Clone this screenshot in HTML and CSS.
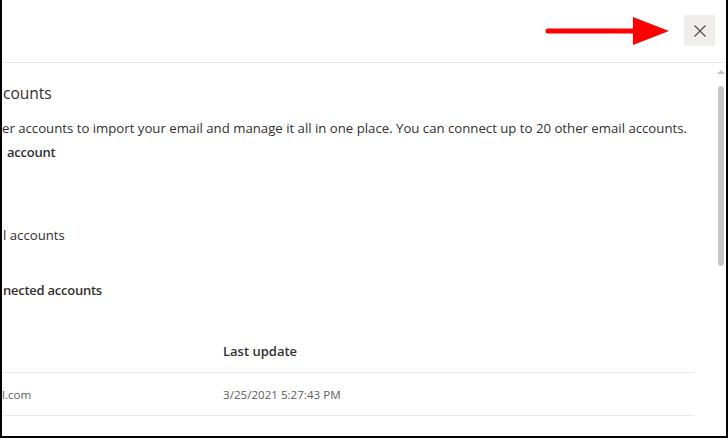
FILE: index.html
```html
<!DOCTYPE html>
<html lang="en">
<head>
<meta charset="utf-8">
<title>Connected accounts</title>
<link rel="stylesheet" href="styles.css">
</head>
<body>
<div class="frame">
  <header class="header">
    <svg class="arrow" width="126" height="30" viewBox="0 0 126 30" aria-hidden="true">
      <line x1="4" y1="15" x2="92" y2="15" stroke="#ff0000" stroke-width="5" stroke-linecap="round"/>
      <polygon points="89,1 125,15 89,29" fill="#ff0000"/>
    </svg>
    <button class="close" aria-label="Close">
      <svg width="14" height="14" viewBox="0 0 14 14" aria-hidden="true">
        <path d="M1.5 1.5 L12.5 12.5 M12.5 1.5 L1.5 12.5" stroke="#4a4a4a" stroke-width="1.1" fill="none"/>
      </svg>
    </button>
  </header>
  <div class="main">
    <section class="content">
      <h1 class="title">counts</h1>
      <p class="desc">er accounts to import your email and manage it all in one place. You can connect up to 20 other email accounts.</p>
      <h2 class="sub add">account</h2>
      <p class="plain other">l accounts</p>
      <h2 class="sub manage">nected accounts</h2>
      <div class="table">
        <div class="row head">
          <div class="col1"></div>
          <div class="col2">Last update</div>
        </div>
        <div class="row">
          <div class="col1">l.com</div>
          <div class="col2">3/25/2021 5:27:43 PM</div>
        </div>
      </div>
    </section>
    <div class="scrollbar">
      <div class="up"></div>
      <div class="thumb"></div>
    </div>
  </div>
</div>
</body>
</html>
```
FILE: styles.css
```css
* { box-sizing: border-box; }
html, body { margin: 0; padding: 0; background: #fff; }
body { font-family: "Open Sans", "Noto Sans", sans-serif; color: #323130; }

.frame {
  width: 728px;
  height: 438px;
  border-left: 2px solid #000;
  border-right: 2px solid #000;
  border-bottom: 2px solid #000;
  overflow: hidden;
  display: flex;
  flex-direction: column;
}

.header {
  height: 63px;
  flex: none;
  display: flex;
  justify-content: flex-end;
  align-items: flex-start;
  padding: 15px 11px 0 0;
  border-bottom: 1px solid #edebe9;
  gap: 14px;
}
.arrow { margin-top: 1px; }
.close {
  width: 31px;
  height: 31px;
  border: 0;
  border-radius: 2px;
  background: #efeeed;
  padding: 0;
  display: flex;
  align-items: center;
  justify-content: center;
}

.main { flex: 1; display: flex; min-height: 0; }
.content { flex: 1; padding-top: 18px; overflow: hidden; }

.title {
  margin: 0;
  padding-left: 1px;
  font-size: 15.5px;
  line-height: 24px;
  font-weight: 400;
}

.desc {
  margin: 13px 0 0;
  font-size: 13.2px;
  line-height: 20px;
  white-space: nowrap;
}
.sub {
  margin: 4px 0 0;
  font-size: 13px;
  line-height: 20px;
  font-weight: 600;
  letter-spacing: -0.25px;
}
.add { padding-left: 5px; }
.plain {
  margin: 0;
  padding-left: 1px;
  font-size: 13.2px;
  line-height: 20px;
}
.other { margin-top: 63px; }
.manage { margin-top: 35px; padding-left: 1px; }

.table { margin-top: 30px; width: 692px; }
.row {
  display: flex;
  align-items: center;
  height: 43px;
  border-bottom: 1px solid #edebe9;
}
.row.head { font-size: 13px; font-weight: 600; }
.row:not(.head) { font-size: 11.6px; color: #605e5c; }
.col1 { width: 221px; }
.col2 { flex: 1; }

.scrollbar {
  width: 8px;
  flex: none;
  margin-right: 1px;
  display: flex;
  flex-direction: column;
  align-items: center;
  padding-top: 7px;
}
.up {
  width: 0;
  height: 0;
  border-left: 4px solid transparent;
  border-right: 4px solid transparent;
  border-bottom: 4px solid #c2c2c2;
}
.thumb {
  margin-top: 12px;
  width: 6px;
  height: 180px;
  border-radius: 3px;
  background: #c8c6c4;
}
```
